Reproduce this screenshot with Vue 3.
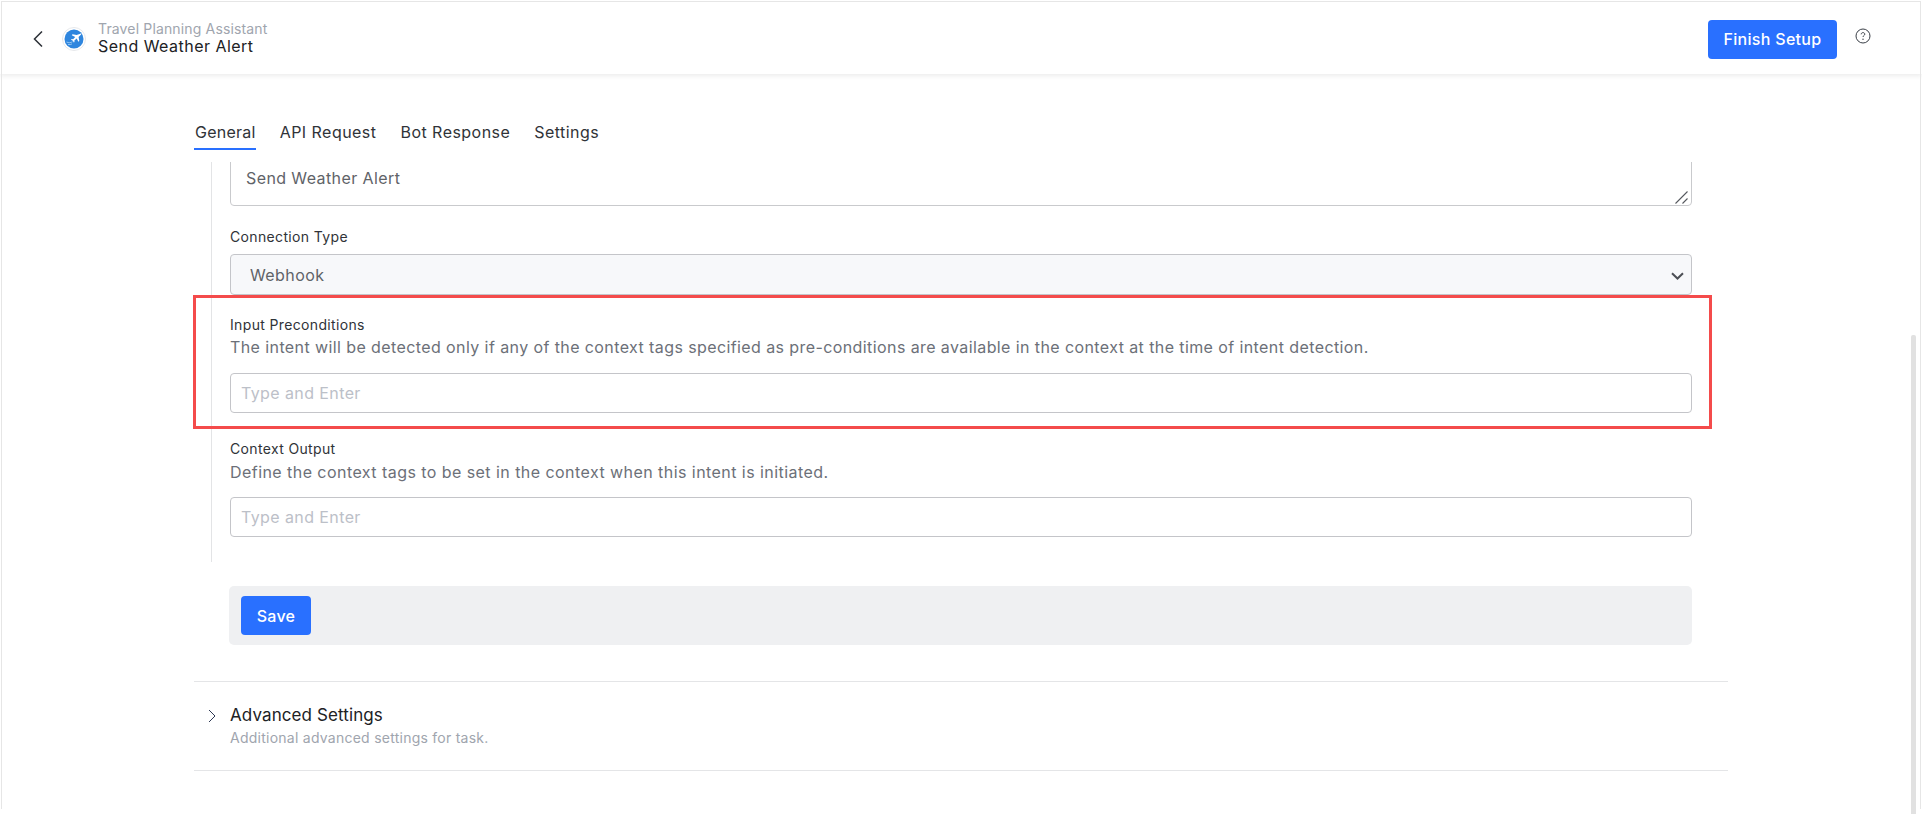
<script setup>
const tabs = ['General', 'API Request', 'Bot Response', 'Settings']
</script>

<template>
  <div class="page">
    <header class="topbar">
      <div class="identity">
        <svg class="back" width="10" height="16" viewBox="0 0 10 16" fill="none">
          <path d="M9 .5 1.500 8 9 15.500" stroke="#2b2f36" stroke-width="1.5" />
        </svg>
        <svg class="logo" width="24" height="24" viewBox="0 0 24 24">
          <circle cx="12" cy="12" r="11.500" fill="#fff" stroke="#e6e8eb" />
          <circle cx="12" cy="12" r="9.500" fill="#2f86de" />
          <path d="M18.300 6.700c.6-.4 1.200.2.800.8l-2.500 2.500.7 4.100-.9.700-1.700-3.400-2.300 2.100.1 1.500-.7.600-.9-1.900-1.900-.9.600-.7 1.500.1 2.100-2.300-3.400-1.700.7-.9 4.100.7z" fill="#fff" />
          <path d="M4.500 15c2.200 1 4.300.8 6-.2M6 17.500c1.500.3 3 .1 4-.6" stroke="#a9d2f5" stroke-width=".8" fill="none" />
        </svg>
        <div class="names">
          <div class="assistant">Travel Planning Assistant</div>
          <div class="task">Send Weather Alert</div>
        </div>
      </div>
      <div class="actions">
        <button class="primary finish" type="button">Finish Setup</button>
        <svg class="help" width="16" height="16" viewBox="0 0 16 16" fill="none">
          <circle cx="8" cy="8" r="7" stroke="#3a3f47" stroke-width="1" />
          <path d="M6.200 6.300c0-1 .8-1.700 1.800-1.700s1.800.7 1.800 1.600c0 1.300-1.800 1.400-1.800 2.800" stroke="#3a3f47" stroke-width="1" />
          <circle cx="8" cy="11.200" r=".7" fill="#3a3f47" />
        </svg>
      </div>
    </header>

    <main class="main">
      <nav class="tabs">
        <span v-for="(tab, i) in tabs" :key="tab" class="tab" :class="{ active: i === 0 }">{{ tab }}</span>
      </nav>

      <section class="form">
        <div class="clip">
          <textarea class="area" readonly>Send Weather Alert</textarea>
          <svg class="grip" width="13" height="13" viewBox="0 0 13 13" fill="none">
            <path d="M.5 12.500 12.500.5M7.500 12.500l5-5" stroke="#55585e" stroke-width="1.100" />
          </svg>
        </div>

        <label class="label first">Connection Type</label>
        <div class="select-wrap">
          <select class="control select">
            <option>Webhook</option>
          </select>
          <svg class="caret" width="13" height="8" viewBox="0 0 13 8" fill="none">
            <path d="M1 1.200 6.500 6.500 12 1.200" stroke="#4c4f55" stroke-width="2" />
          </svg>
        </div>

        <div class="highlight">
          <label class="label">Input Preconditions</label>
          <p class="desc">The intent will be detected only if any of the context tags specified as pre-conditions are available in the context at the time of intent detection.</p>
          <input class="control input" placeholder="Type and Enter" />
        </div>

        <div class="output">
          <label class="label">Context Output</label>
          <p class="desc">Define the context tags to be set in the context when this intent is initiated.</p>
          <input class="control input" placeholder="Type and Enter" />
        </div>
      </section>

      <div class="savebar">
        <button class="primary save" type="button">Save</button>
      </div>

      <div class="advanced">
        <svg class="chev" width="8" height="14" viewBox="0 0 8 14" fill="none">
          <path d="M1 1l6 6-6 6" stroke="#2f3a55" stroke-width="1" />
        </svg>
        <div>
          <div class="adv-title">Advanced Settings</div>
          <div class="adv-sub">Additional advanced settings for task.</div>
        </div>
      </div>
    </main>

    <div class="frame"></div>
    <div class="thumb"></div>
  </div>
</template>

<style>
html, body { margin: 0; background: #fff; }
</style>

<style scoped>
* { box-sizing: border-box; }
.page {
  position: relative;
  height: 815px;
  overflow: hidden;
  background: #fff;
  font-family: Inter, "Liberation Sans", sans-serif;
  color: #202124;
}
.topbar {
  height: 74px;
  padding: 2px 51px 0 33px;
  display: flex;
  align-items: flex-start;
  justify-content: space-between;
  background: #fff;
  box-shadow: 0 2px 5px rgba(0, 0, 0, 0.08);
}
.identity { display: flex; align-items: flex-start; padding-top: 18px; }
.back { margin: 11px 19px 0 0; }
.logo { margin: 7px 12px 0 0; }
.names { display: flex; flex-direction: column; margin-top: 1px; }
.assistant { font-size: 14px; line-height: 16px; letter-spacing: 0.15px; color: #a0a5ae; }
.task { font-size: 16px; line-height: 18px; letter-spacing: 0.47px; color: #202124; }
.actions { display: flex; align-items: flex-start; padding-top: 18px; }
.primary {
  border: 0;
  border-radius: 4px;
  background: #2970ff;
  color: #fff;
  font-family: inherit;
  font-weight: 500;
  letter-spacing: 0.3px;
  padding: 0;
}
.finish { width: 129px; height: 39px; padding-bottom: 2px; font-size: 16px; }
.help { margin: 8px 0 0 18px; }
.main { width: 1534px; margin-left: 194px; }
.tabs { display: flex; gap: 24px; margin-top: 40px; }
.tab {
  padding: 8px 0 6px;
  font-size: 16px;
  line-height: 20px;
  letter-spacing: 0.46px;
  border-bottom: 2px solid transparent;
  color: #303338;
}
.tab.active {
  padding-left: 1px;
  letter-spacing: 0.25px;
  border-bottom-color: #2970ff;
}
.form {
  margin: 12px 0 0 17px;
  width: 1481px;
  padding: 0 0 25px 18px;
  border-left: 1px solid #e3e4e6;
}
.clip { position: relative; height: 44px; overflow: hidden; }
.area {
  display: block;
  width: 100%;
  height: 48px;
  margin-top: -4px;
  padding: 9px 15px;
  border: 1px solid #c9cacd;
  border-radius: 4px;
  font: 16px/20px Inter, sans-serif;
  letter-spacing: 0.4px;
  color: #5f6368;
  outline: none;
  resize: none;
}
.grip { position: absolute; right: 4px; bottom: 2px; }
.label {
  display: block;
  font-size: 14px;
  line-height: 18px;
  letter-spacing: 0.35px;
  color: #303338;
}
.label.first { margin-top: 22px; }
.control {
  display: block;
  width: 100%;
  border: 1px solid #c4c5c9;
  border-radius: 4px;
  font: 16px/20px Inter, sans-serif;
  letter-spacing: 0.4px;
  outline: none;
}
.select-wrap { position: relative; margin-top: 8px; }
.select {
  height: 41px;
  padding: 0 15px 0 19px;
  appearance: none;
  background-color: #f7f8fa;
  color: #5f6368;
}
.caret { position: absolute; right: 8px; top: 18px; pointer-events: none; }
.input {
  height: 40px;
  padding: 0 10px;
  background: #fff;
}
.input::placeholder { color: #bcc0c8; opacity: 1; }
.highlight {
  margin: 0 -20px 0 -37px;
  padding: 18px 17px 13px 34px;
  border: 3px solid #f44b4b;
}
.desc {
  margin: 2px 0 15px;
  font-size: 16px;
  line-height: 22px;
  letter-spacing: 0.405px;
  color: #6c7078;
}
.output { margin-top: 11px; }
.output .desc { margin: 3px 0 14px; letter-spacing: 0.445px; }
.savebar {
  margin: 24px 0 0 35px;
  width: 1463px;
  height: 59px;
  padding: 10px 12px;
  background: #eff0f2;
  border-radius: 5px;
}
.save { display: block; width: 70px; height: 39px; font-size: 16px; }
.advanced {
  margin-top: 36px;
  padding: 22px 0 23px 14px;
  display: flex;
  align-items: flex-start;
  gap: 14px;
  border-top: 1px solid #e4e5e7;
  border-bottom: 1px solid #e4e5e7;
}
.chev { margin-top: 5px; }
.adv-title { font-size: 17px; line-height: 22px; letter-spacing: 0.1px; color: #202124; }
.adv-sub { margin-top: 3px; font-size: 14px; line-height: 18px; letter-spacing: 0.25px; color: #a0a5ae; }
.frame {
  position: absolute;
  inset: 1px 1px 6px 1px;
  border: 1px solid #e6e6e6;
  border-bottom: 0;
  pointer-events: none;
}
.thumb {
  position: absolute;
  left: 1911px;
  top: 335px;
  width: 5px;
  height: 479px;
  background: #e1e1e1;
  border-radius: 2px 2px 0 0;
}
</style>
